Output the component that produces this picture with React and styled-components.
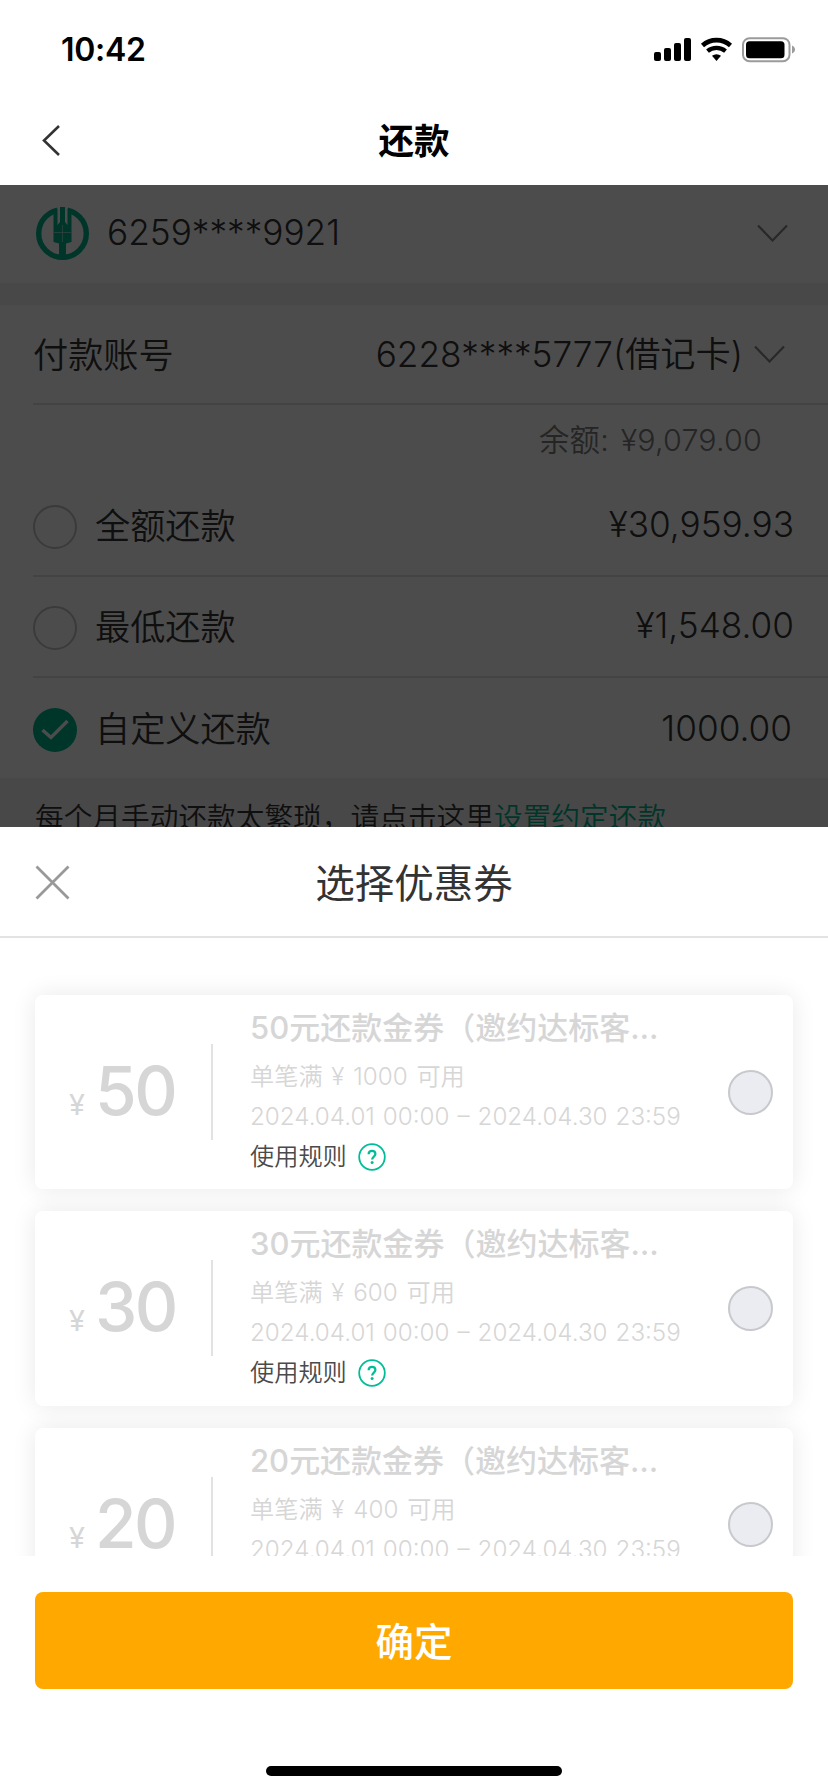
import React from 'react';
import styled, { createGlobalStyle } from 'styled-components';

const brandGreen = '#00b38a';
const textDark = '#333';
const disabledText = '#d6d6d6';

const GlobalStyle = createGlobalStyle`
  * {
    box-sizing: border-box;
  }
  body {
    margin: 0;
    background: white;
    font-family: Inter, 'Noto Sans CJK SC', sans-serif;
    font-weight: 350;
    color: ${textDark};
  }
`;

const Screen = styled.div`
  width: 828px;
  height: 1792px;
  display: flex;
  flex-direction: column;
  overflow: hidden;
  background: white;
`;

const StatusBar = styled.div`
  height: 96px;
  padding: 3px 32px 0 61px;
  display: flex;
  align-items: center;
  justify-content: space-between;
  color: black;
`;

const Time = styled.div`
  font-size: 32px;
  font-weight: 600;
  letter-spacing: -0.3px;
`;

const StatusIcons = styled.svg`
  display: block;
  width: 142px;
  height: 26px;
`;

const NavBar = styled.div`
  height: 89px;
  padding: 0 42px;
  display: grid;
  grid-template-columns: 60px 1fr 60px;
  align-items: center;
`;

const NavTitle = styled.h1`
  margin: 0;
  padding-top: 2px;
  text-align: center;
  font-size: 35.5px;
  line-height: 48px;
  font-weight: 600;
  color: black;
`;

const Icon = styled.svg`
  display: block;
  flex: none;
  width: ${({ w }) => w}px;
  height: ${({ h }) => h}px;
`;

const Page = styled.div`
  position: relative;
  height: 642px;
  overflow: hidden;
  background: #f0f0f0;
`;

const Shade = styled.div`
  position: absolute;
  inset: 0;
  background: rgba(0, 0, 0, 0.7);
`;

const CardRow = styled.div`
  height: 98px;
  margin-bottom: 22px;
  padding: 0 40px 2px 36px;
  display: flex;
  align-items: center;
  background: white;
  font-size: 35.2px;
`;

const CardNumber = styled.div`
  flex: 1;
  margin-left: 18px;
  padding-bottom: 2px;
`;

const Panel = styled.div`
  background: white;
  padding-left: 33px;
`;

const Row = styled.div`
  height: ${({ h }) => h}px;
  padding: 0 ${({ inset }) => inset || 34}px ${({ lift }) => lift || 0}px 0;
  display: flex;
  align-items: center;
  font-size: 35.2px;
  border-bottom: ${({ last }) => (last ? 'none' : '2px solid #e2e2e2')};
`;

const Label = styled.div`
  flex: 1;
  margin-left: ${({ inset }) => inset || 0}px;
  padding-bottom: ${({ lift }) => lift || 1}px;
`;

const Value = styled.div`
  margin-right: ${({ gap }) => gap || 0}px;
  padding-bottom: ${({ lift }) => lift || 0}px;
  padding-top: ${({ drop }) => drop || 0}px;
  white-space: nowrap;
`;

const Balance = styled.div`
  height: 70px;
  padding-right: 66px;
  text-align: right;
  font-size: 30.4px;
  line-height: 70px;
  letter-spacing: 0.2px;
  word-spacing: 3px;
  color: #7d7d7d;
`;

const RadioMark = styled.div`
  width: 44px;
  height: 44px;
  margin-top: 6px;
  display: flex;
  align-items: center;
  justify-content: center;
  border-radius: 50%;
  border: ${({ checked }) => (checked ? 'none' : '2px solid #c4c4c4')};
  background: ${({ checked }) => (checked ? brandGreen : 'transparent')};
`;

const Notice = styled.div`
  padding: 17px 35px 0;
  font-size: 28.7px;
  line-height: 46px;
  white-space: nowrap;
`;

const Link = styled.span`
  color: ${brandGreen};
`;

const Sheet = styled.div`
  flex: 1;
  display: flex;
  flex-direction: column;
  background: white;
`;

const SheetHeader = styled.div`
  height: 111px;
  padding: 2px 35px 0;
  display: grid;
  grid-template-columns: 60px 1fr 60px;
  align-items: center;
  border-bottom: 2px solid #e3e3e3;
`;

const SheetTitle = styled.h2`
  margin: 0;
  padding-top: 2px;
  text-align: center;
  font-size: 39.5px;
  line-height: 56px;
  font-weight: 400;
`;

const CouponList = styled.div`
  height: 618px;
  padding: 57px 35px 0;
  display: flex;
  flex-direction: column;
  gap: 22px;
  overflow: hidden;
`;

const Coupon = styled.div`
  flex: none;
  height: 194.3px;
  padding-right: 20px;
  display: flex;
  align-items: center;
  border-radius: 8px;
  background: white;
  box-shadow: 0 0 24px rgba(0, 0, 0, 0.09);
  color: ${disabledText};
`;

const Amount = styled.div`
  width: 178px;
  height: 96px;
  padding-left: 34px;
  display: flex;
  align-items: baseline;
  border-right: 2px solid #e2e2e2;
  font-size: 67.5px;
  line-height: 94px;
  font-weight: 500;
  letter-spacing: -2.6px;
`;

const Currency = styled.span`
  width: 26px;
  font-size: 29px;
  font-weight: 400;
`;

const CouponBody = styled.div`
  flex: 1;
  align-self: stretch;
  padding: 10px 0 0 37px;
  white-space: nowrap;
`;

const CouponTitle = styled.div`
  font-size: 31px;
  line-height: 46px;
  font-weight: 500;
`;

const CouponText = styled.div`
  margin-top: ${({ gap }) => gap || 0}px;
  font-size: 24.2px;
  line-height: 40px;
  word-spacing: ${({ spread }) => spread || 0}px;
`;

const Rules = styled.div`
  display: flex;
  align-items: center;
  gap: 11px;
  font-size: 24.2px;
  line-height: 40px;
  color: #4a4a4a;
`;

const CouponRadio = styled.div`
  width: 45px;
  height: 45px;
  border: 2px solid #c8c9cd;
  border-radius: 50%;
  background: #ebecf1;
`;

const Footer = styled.div`
  flex: 1;
  padding: 36px 35px 16px;
  display: flex;
  flex-direction: column;
  align-items: center;
  justify-content: space-between;
`;

const ConfirmButton = styled.button`
  width: 100%;
  height: 97px;
  padding: 0 0 4px;
  border: none;
  border-radius: 8px;
  background: #ffa900;
  color: white;
  font-family: inherit;
  font-size: 38.5px;
  font-weight: 500;
`;

const HomeIndicator = styled.div`
  width: 296px;
  height: 10px;
  border-radius: 5px;
  background: black;
`;

const ChevronDown = () => (
  <Icon w={31} h={18} viewBox="0 0 31 18">
    <path d="M1 1.500 15.500 16.500 30 1.500" fill="none" stroke="#888" strokeWidth="2.2" />
  </Icon>
);

const BankLogo = () => (
  <Icon w={53} h={53} viewBox="0 0 53 53">
    <circle cx="26.5" cy="26.5" r="23.8" fill="none" stroke={brandGreen} strokeWidth="5.4" />
    <path d="M21 0h11v9h-11z" fill="white" />
    <path
      d="M24 0h5v15l2.500 3V1.500l4 1.500V15.500V35l-5.500 1.500V50h-7V36.500L17.500 35V3l4-1.500V18l2.500-3z"
      fill={brandGreen}
    />
    <path d="M26.500 18v17M18 25.500h17M22.500 0v15M30.500 0v15" stroke="white" strokeWidth="0.9" opacity="0.55" />
  </Icon>
);

const HelpIcon = () => (
  <Icon w={28} h={28} viewBox="0 0 28 28">
    <circle cx="14" cy="14" r="12.8" fill="none" stroke="#00bd97" strokeWidth="1.8" />
    <path
      d="M10.600 11.200c0-2.200 1.400-3.400 3.400-3.400s3.400 1.200 3.400 3.200c0 2.500-3.300 2.700-3.300 5.600"
      fill="none"
      stroke="#00bd97"
      strokeWidth="2.2"
    />
    <circle cx="14.100" cy="19.400" r="1.500" fill="#00bd97" />
  </Icon>
);

const repayOptions = [
  { label: '全额还款', value: '¥30,959.93', h: 102, lift: 3 },
  { label: '最低还款', value: '¥1,548.00', h: 101, lift: 4 },
  { label: '自定义还款', value: '1000.00', h: 100, lift: 2, inset: 36, checked: true }
];

const coupons = [
  { amount: 50, limit: 1000 },
  { amount: 30, limit: 600 },
  { amount: 20, limit: 400 }
];

const RepayOption = ({ option, last }) => (
  <Row h={option.h} lift={option.lift} inset={option.inset} last={last}>
    <RadioMark checked={option.checked}>
      {option.checked && (
        <Icon w={28} h={22} viewBox="0 0 28 22">
          <path d="M1.500 11 10 18.500 26.500 2" fill="none" stroke="white" strokeWidth="3.400" />
        </Icon>
      )}
    </RadioMark>
    <Label inset={18}>{option.label}</Label>
    <Value drop={1}>{option.value}</Value>
  </Row>
);

const CouponCard = ({ coupon }) => (
  <Coupon>
    <Amount>
      <Currency>¥</Currency>
      {coupon.amount}
    </Amount>
    <CouponBody>
      <CouponTitle>{coupon.amount}元还款金券（邀约达标客…</CouponTitle>
      <CouponText gap={6} spread={2}>
        单笔满 ¥ {coupon.limit} 可用
      </CouponText>
      <CouponText spread={1.2}>2024.04.01 00:00 – 2024.04.30 23:59</CouponText>
      <Rules>
        使用规则
        <HelpIcon />
      </Rules>
    </CouponBody>
    <CouponRadio />
  </Coupon>
);

const App = () => (
  <>
    <GlobalStyle />
    <Screen>
      <StatusBar>
        <Time>10:42</Time>
        <StatusIcons viewBox="0 0 142 26">
          <rect x="0" y="15" width="7" height="9" rx="2" />
          <rect x="10" y="11" width="7" height="13" rx="2" />
          <rect x="20" y="6" width="7" height="18" rx="2" />
          <rect x="30" y="1" width="7" height="23" rx="2" />
          <path d="M48.500 8.500a21 21 0 0 1 28 0" fill="none" stroke="black" strokeWidth="4.600" />
          <path d="M53.500 14.200a14 14 0 0 1 18 0" fill="none" stroke="black" strokeWidth="4.300" />
          <path d="M58 18.800a7 7 0 0 1 9 0L62.500 24z" />
          <rect x="89" y="1.200" width="46.500" height="23" rx="6.500" fill="none" stroke="#9b9b9b" strokeWidth="2" />
          <rect x="92" y="4.200" width="38.500" height="17" rx="3.500" />
          <path d="M138 8.500c4 1.500 4 6.500 0 8z" fill="#9b9b9b" />
        </StatusIcons>
      </StatusBar>
      <NavBar>
        <Icon w={18} h={31} viewBox="0 0 18 31">
          <path d="M17 1 2 15.500 17 30" fill="none" stroke="#333" strokeWidth="2.600" />
        </Icon>
        <NavTitle>还款</NavTitle>
      </NavBar>
      <Page>
        <CardRow>
          <BankLogo />
          <CardNumber>6259****9921</CardNumber>
          <ChevronDown />
        </CardRow>
        <Panel>
          <Row h={100} inset={43}>
            <Label lift={4}>付款账号</Label>
            <Value gap={11} lift={6}>6228****5777(借记卡)</Value>
            <ChevronDown />
          </Row>
          <Balance>余额: ¥9,079.00</Balance>
          {repayOptions.map((option, i) => (
            <RepayOption key={option.label} option={option} last={i === repayOptions.length - 1} />
          ))}
        </Panel>
        <Notice>
          每个月手动还款太繁琐，请点击这里<Link>设置约定还款</Link>
        </Notice>
        <Shade />
      </Page>
      <Sheet>
        <SheetHeader>
          <Icon w={35} h={35} viewBox="0 0 35 35">
            <path d="M1.500 1.500l32 32M33.500 1.500l-32 32" stroke="#999" strokeWidth="2.800" />
          </Icon>
          <SheetTitle>选择优惠券</SheetTitle>
        </SheetHeader>
        <CouponList>
          {coupons.map(coupon => (
            <CouponCard key={coupon.amount} coupon={coupon} />
          ))}
        </CouponList>
        <Footer>
          <ConfirmButton>确定</ConfirmButton>
          <HomeIndicator />
        </Footer>
      </Sheet>
    </Screen>
  </>
);

export default App;
